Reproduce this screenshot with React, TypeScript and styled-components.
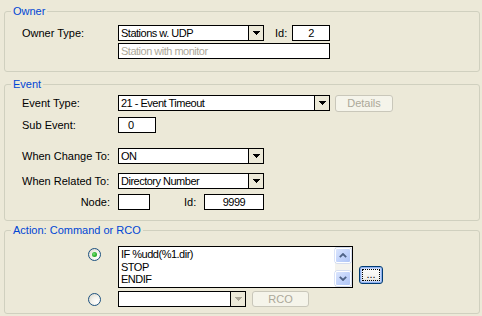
import React from 'react';
import styled, { createGlobalStyle } from 'styled-components';

const Global = createGlobalStyle`
  html, body { margin: 0; padding: 0; background: #ECE9D8; }
  body {
    font-family: "Liberation Sans", Arial, sans-serif;
    font-size: 11px;
    color: #000;
  }
`;

const Page = styled.div`
  width: 482px;
  height: 316px;
  box-sizing: border-box;
  padding: 11px 2px 0 4px;
  display: flex;
  flex-direction: column;
  overflow: hidden;
`;

const Group = styled.section<{ $mt?: number; $pb: number }>`
  margin-top: ${(p) => p.$mt ?? 0}px;
  width: 476px;
  box-sizing: border-box;
  border: 1px solid #d0d0bf;
  border-radius: 3px;
  padding: 0 0 ${(p) => p.$pb}px 0;
  display: flex;
  flex-direction: column;
`;

const Title = styled.div`
  width: fit-content;
  margin: -7px 0 0 6px;
  padding: 0 2px;
  height: 13px;
  line-height: 13px;
  background: #ece9d8;
  color: #0046d5;
  white-space: nowrap;
`;

const Row = styled.div<{ $mt: number; $h?: number; $top?: boolean }>`
  margin-top: ${(p) => p.$mt}px;
  height: ${(p) => p.$h ?? 16}px;
  padding-left: 17px;
  display: flex;
  align-items: ${(p) => (p.$top ? 'flex-start' : 'center')};
`;

const Label = styled.div<{ $right?: boolean }>`
  width: 96px;
  flex: none;
  box-sizing: border-box;
  line-height: 16px;
  white-space: nowrap;
  text-align: ${(p) => (p.$right ? 'right' : 'left')};
  padding-right: ${(p) => (p.$right ? 8 : 0)}px;
`;

const InlineLabel = styled.div<{ $w: number; $pl: number }>`
  width: ${(p) => p.$w}px;
  flex: none;
  box-sizing: border-box;
  padding-left: ${(p) => p.$pl}px;
  line-height: 16px;
`;

const FieldText = styled.div<{ $w: number; $align?: 'left' | 'center'; $pl?: number; $disabled?: boolean }>`
  width: ${(p) => p.$w}px;
  height: 16px;
  flex: none;
  box-sizing: border-box;
  border: 1px solid #000;
  background: #fff;
  color: ${(p) => (p.$disabled ? '#aca899' : '#000')};
  letter-spacing: -0.5px;
  line-height: 14px;
  text-align: ${(p) => p.$align ?? 'left'};
  padding-left: ${(p) => p.$pl ?? 2}px;
  white-space: nowrap;
  overflow: hidden;
`;

const Combo = styled.div<{ $w: number }>`
  width: ${(p) => p.$w}px;
  height: 16px;
  flex: none;
  box-sizing: border-box;
  border: 1px solid #000;
  background: #fff;
  display: flex;
`;

const ComboText = styled.div`
  flex: 1;
  padding-left: 2px;
  line-height: 14px;
  letter-spacing: -0.5px;
  white-space: nowrap;
  overflow: hidden;
`;

const ComboButton = styled.div`
  width: 15px;
  flex: none;
  box-sizing: border-box;
  border-left: 1px solid #000;
  background: #ece9d8;
  display: flex;
  align-items: center;
  justify-content: center;
`;

const FlatButton = styled.div<{ $w: number; $h: number; $ml: number }>`
  width: ${(p) => p.$w}px;
  height: ${(p) => p.$h}px;
  margin-left: ${(p) => p.$ml}px;
  flex: none;
  box-sizing: border-box;
  border: 1px solid #c9c7ba;
  border-radius: 3px;
  background: #f5f4ea;
  color: #aca899;
  line-height: ${(p) => p.$h - 2}px;
  text-align: center;
`;

const RadioCell = styled.div`
  width: 96px;
  flex: none;
  box-sizing: border-box;
  padding: 2px 17px 0 0;
  display: flex;
  justify-content: flex-end;
`;

const Radio = styled.div<{ $checked?: boolean }>`
  width: 13px;
  height: 13px;
  box-sizing: border-box;
  border-radius: 50%;
  border: 1px solid #1c5180;
  background: radial-gradient(circle at 70% 70%, #ffffff 0%, #f3f2ec 45%, #d6d3c7 100%);
  display: flex;
  align-items: center;
  justify-content: center;
`;

const Dot = styled.div`
  width: 5px;
  height: 5px;
  border-radius: 50%;
  background: radial-gradient(circle at 40% 40%, #7be07b 0%, #2fb52f 50%, #1d8f1d 100%);
`;

const TextArea = styled.div`
  width: 235px;
  height: 42px;
  flex: none;
  box-sizing: border-box;
  border: 1px solid #000;
  background: #fff;
  display: flex;
`;

const Lines = styled.div`
  flex: 1;
  padding: 1px 0 0 2px;
  line-height: 12.5px;
  letter-spacing: -0.5px;
  white-space: pre;
  overflow: hidden;
`;

const ScrollBar = styled.div`
  width: 17px;
  flex: none;
  box-sizing: border-box;
  padding: 1px 1px 1px 0;
  background: #f4f3ee;
  display: flex;
  flex-direction: column;
  justify-content: space-between;
`;

const ScrollButton = styled.div`
  height: 15px;
  box-sizing: border-box;
  border: 1px solid #fff;
  border-radius: 2px;
  background: linear-gradient(135deg, #dbe5fd 0%, #c3d4fb 50%, #b0c5f5 100%);
  box-shadow: 0 0 0 0.5px #b7c9f2;
  display: flex;
  align-items: center;
  justify-content: center;
`;

const DefaultButton = styled.div`
  width: 24px;
  height: 18px;
  margin: 20px 0 0 6px;
  flex: none;
  box-sizing: border-box;
  border: 1px solid #003c74;
  border-radius: 3px;
  background: linear-gradient(#ffffff 0%, #f3f2ee 70%, #d8d4c8 100%);
  box-shadow: inset 0 0 0 1px #8fb0ee, inset 0 0 0 2px #c5d7fa;
  padding: 2px;
  display: flex;
`;

const FocusRect = styled.div`
  flex: 1;
  border: 1px dotted #000;
  line-height: 8px;
  text-align: center;
  font-size: 11px;
  overflow: hidden;
`;

const Arrow = ({ disabled }: { disabled?: boolean }) => (
  <svg width="7" height="4" viewBox="0 0 7 4" shapeRendering="crispEdges">
    <polygon points="0,0 7,0 3.5,4" fill={disabled ? '#aca899' : '#000'} />
  </svg>
);

const Chevron = ({ up }: { up?: boolean }) => (
  <svg width="8" height="5" viewBox="0 0 8 5">
    <polyline
      points={up ? '0.8,4.2 4,1 7.2,4.2' : '0.8,0.8 4,4 7.2,0.8'}
      fill="none"
      stroke="#4d6185"
      strokeWidth="1.8"
    />
  </svg>
);

const ComboBox = ({ w, text, disabled }: { w: number; text: string; disabled?: boolean }) => (
  <Combo $w={w}>
    <ComboText>{text}</ComboText>
    <ComboButton>
      <Arrow disabled={disabled} />
    </ComboButton>
  </Combo>
);

export default function App() {
  return (
    <>
      <Global />
      <Page>
        <Group $pb={12}>
          <Title>Owner</Title>
          <Row $mt={7}>
            <Label>Owner Type:</Label>
            <ComboBox w={146} text="Stations w. UDP" />
            <InlineLabel $w={28} $pl={11}>Id:</InlineLabel>
            <FieldText $w={38} $align="center" $pl={0}>2</FieldText>
          </Row>
          <Row $mt={2}>
            <Label />
            <FieldText $w={212} $disabled>Station with monitor</FieldText>
          </Row>
        </Group>

        <Group $mt={12} $pb={10}>
          <Title>Event</Title>
          <Row $mt={4}>
            <Label>Event Type:</Label>
            <ComboBox w={212} text="21 - Event Timeout" />
            <FlatButton $w={58} $h={17} $ml={5}>Details</FlatButton>
          </Row>
          <Row $mt={6}>
            <Label>Sub Event:</Label>
            <FieldText $w={38} $pl={9}>0</FieldText>
          </Row>
          <Row $mt={15}>
            <Label>When Change To:</Label>
            <ComboBox w={146} text="ON" />
          </Row>
          <Row $mt={9}>
            <Label>When Related To:</Label>
            <ComboBox w={146} text="Directory Number" />
          </Row>
          <Row $mt={5}>
            <Label $right>Node:</Label>
            <FieldText $w={32} />
            <InlineLabel $w={54} $pl={34}>Id:</InlineLabel>
            <FieldText $w={60} $align="center" $pl={0}>9999</FieldText>
          </Row>
        </Group>

        <Group $mt={9} $pb={6}>
          <Title>Action: Command or RCO</Title>
          <Row $mt={9} $h={42} $top>
            <RadioCell>
              <Radio $checked>
                <Dot />
              </Radio>
            </RadioCell>
            <TextArea>
              <Lines>{'IF %udd(%1.dir)\nSTOP\nENDIF'}</Lines>
              <ScrollBar>
                <ScrollButton>
                  <Chevron up />
                </ScrollButton>
                <ScrollButton>
                  <Chevron />
                </ScrollButton>
              </ScrollBar>
            </TextArea>
            <DefaultButton>
              <FocusRect>...</FocusRect>
            </DefaultButton>
          </Row>
          <Row $mt={3} $top>
            <RadioCell>
              <Radio />
            </RadioCell>
            <ComboBox w={128} text="" disabled />
            <FlatButton $w={57} $h={16} $ml={6}>RCO</FlatButton>
          </Row>
        </Group>
      </Page>
    </>
  );
}
